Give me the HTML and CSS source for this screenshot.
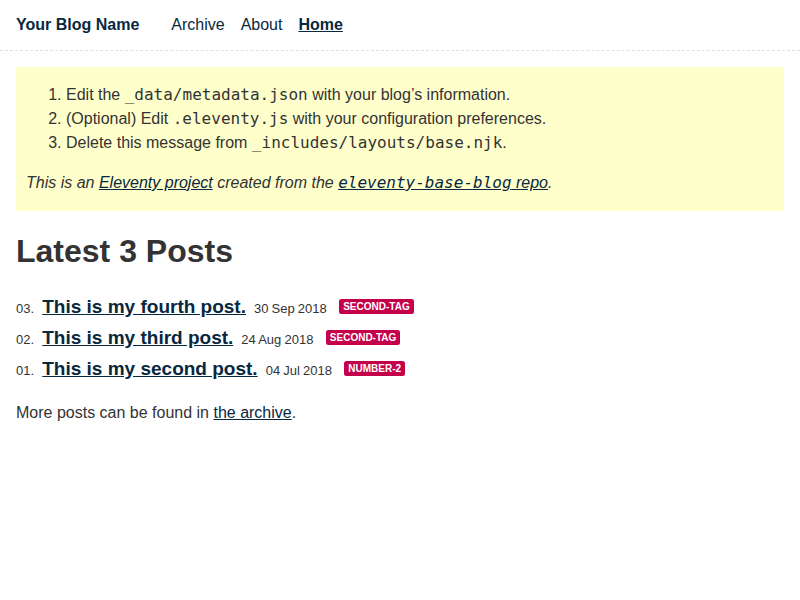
FILE: index.html
```html
<!doctype html>
<html lang="en">
<head>
<meta charset="utf-8">
<title>Your Blog Name</title>
<link rel="stylesheet" href="styles.css">
</head>
<body class="tmpl-home">
<header>
  <h1 class="home"><a href="#">Your Blog Name</a></h1>
  <ul class="nav">
    <li class="nav-item"><a href="#">Archive</a></li>
    <li class="nav-item"><a href="#">About</a></li>
    <li class="nav-item nav-item-active"><a href="#">Home</a></li>
  </ul>
</header>
<main>
  <div class="warning">
    <ol>
      <li>Edit the <code>_data/metadata.json</code> with your blog’s information.</li>
      <li>(Optional) Edit <code>.eleventy.js</code> with your configuration preferences.</li>
      <li>Delete this message from <code>_includes/layouts/base.njk</code>.</li>
    </ol>
    <p><em>This is an <a href="#">Eleventy project</a> created from the <a href="#"><code>eleventy-base-blog</code> repo</a>.</em></p>
  </div>
  <h1 class="page-title">Latest 3 Posts</h1>
  <ol class="postlist">
    <li class="postlist-item" data-n="03"><a href="#" class="postlist-link">This is my fourth post.</a> <time class="postlist-date">30 Sep 2018</time> <a href="#" class="tag">second-tag</a></li>
    <li class="postlist-item" data-n="02"><a href="#" class="postlist-link">This is my third post.</a> <time class="postlist-date">24 Aug 2018</time> <a href="#" class="tag">second-tag</a></li>
    <li class="postlist-item" data-n="01"><a href="#" class="postlist-link">This is my second post.</a> <time class="postlist-date">04 Jul 2018</time> <a href="#" class="tag">number-2</a></li>
  </ol>
  <p>More posts can be found in <a href="#">the archive</a>.</p>
</main>
</body>
</html>
```

FILE: styles.css
```css
* { box-sizing: border-box; }
html, body {
  padding: 0;
  margin: 0;
  font-family: "Liberation Sans", Arial, sans-serif;
  color: #333;
  background-color: #fff;
}
p:last-child { margin-bottom: 0; }
p { max-width: 37.5em; line-height: 1.45; }
a[href] { color: #082840; }
main { padding: 1rem; }
code {
  font-family: "DejaVu Sans Mono", monospace;
  font-size: 16px;
  line-height: 1.5;
}
header {
  border-bottom: 1px dashed #e0e0e0;
  display: flex;
  align-items: center;
}
.home {
  padding: 0 1rem;
  margin: 1rem 0;
  font-size: 1em;
  line-height: 18px;
}
.home a[href] { text-decoration: none; }
.nav {
  padding: 0;
  margin: 0 0 0 1em;
  list-style: none;
  display: flex;
}
.nav-item { margin-right: 1em; }
.nav-item a[href] { text-decoration: none; }
.nav-item-active { font-weight: 700; }
.nav-item-active a[href] { text-decoration: underline; }
.warning {
  background-color: #ffc;
  padding: 1em 0.625em;
}
.warning ol { margin: 0; }
.warning li { line-height: 24px; }
.page-title {
  font-size: 2em;
  margin: 0.67em 0;
  line-height: 38px;
}
.postlist {
  list-style: none;
  padding: 0;
  margin: 0;
}
.postlist-item { line-height: 31px; height: 31px; }
.postlist-item::before {
  display: inline-block;
  content: attr(data-n) ". ";
  white-space: pre;
  font-size: 0.8125em;
  line-height: 100%;
  margin-right: 1px;
  color: #333;
}
.postlist-date {
  font-size: 0.8125em;
  color: #333;
  word-spacing: -0.5px;
}
.postlist-link {
  display: inline-block;
  padding: 0 0.1875em;
  font-size: 1.1875em;
  font-weight: 700;
  line-height: 22px;
}
.tag {
  display: inline-block;
  vertical-align: text-top;
  text-transform: uppercase;
  font-size: 0.625em;
  font-weight: 700;
  line-height: 11px;
  padding: 2px 4px;
  margin-left: 0.8em;
  background-color: #C5004A;
  border-radius: 0.25em;
}
a[href].tag { color: #fff; text-decoration: none; }
```
